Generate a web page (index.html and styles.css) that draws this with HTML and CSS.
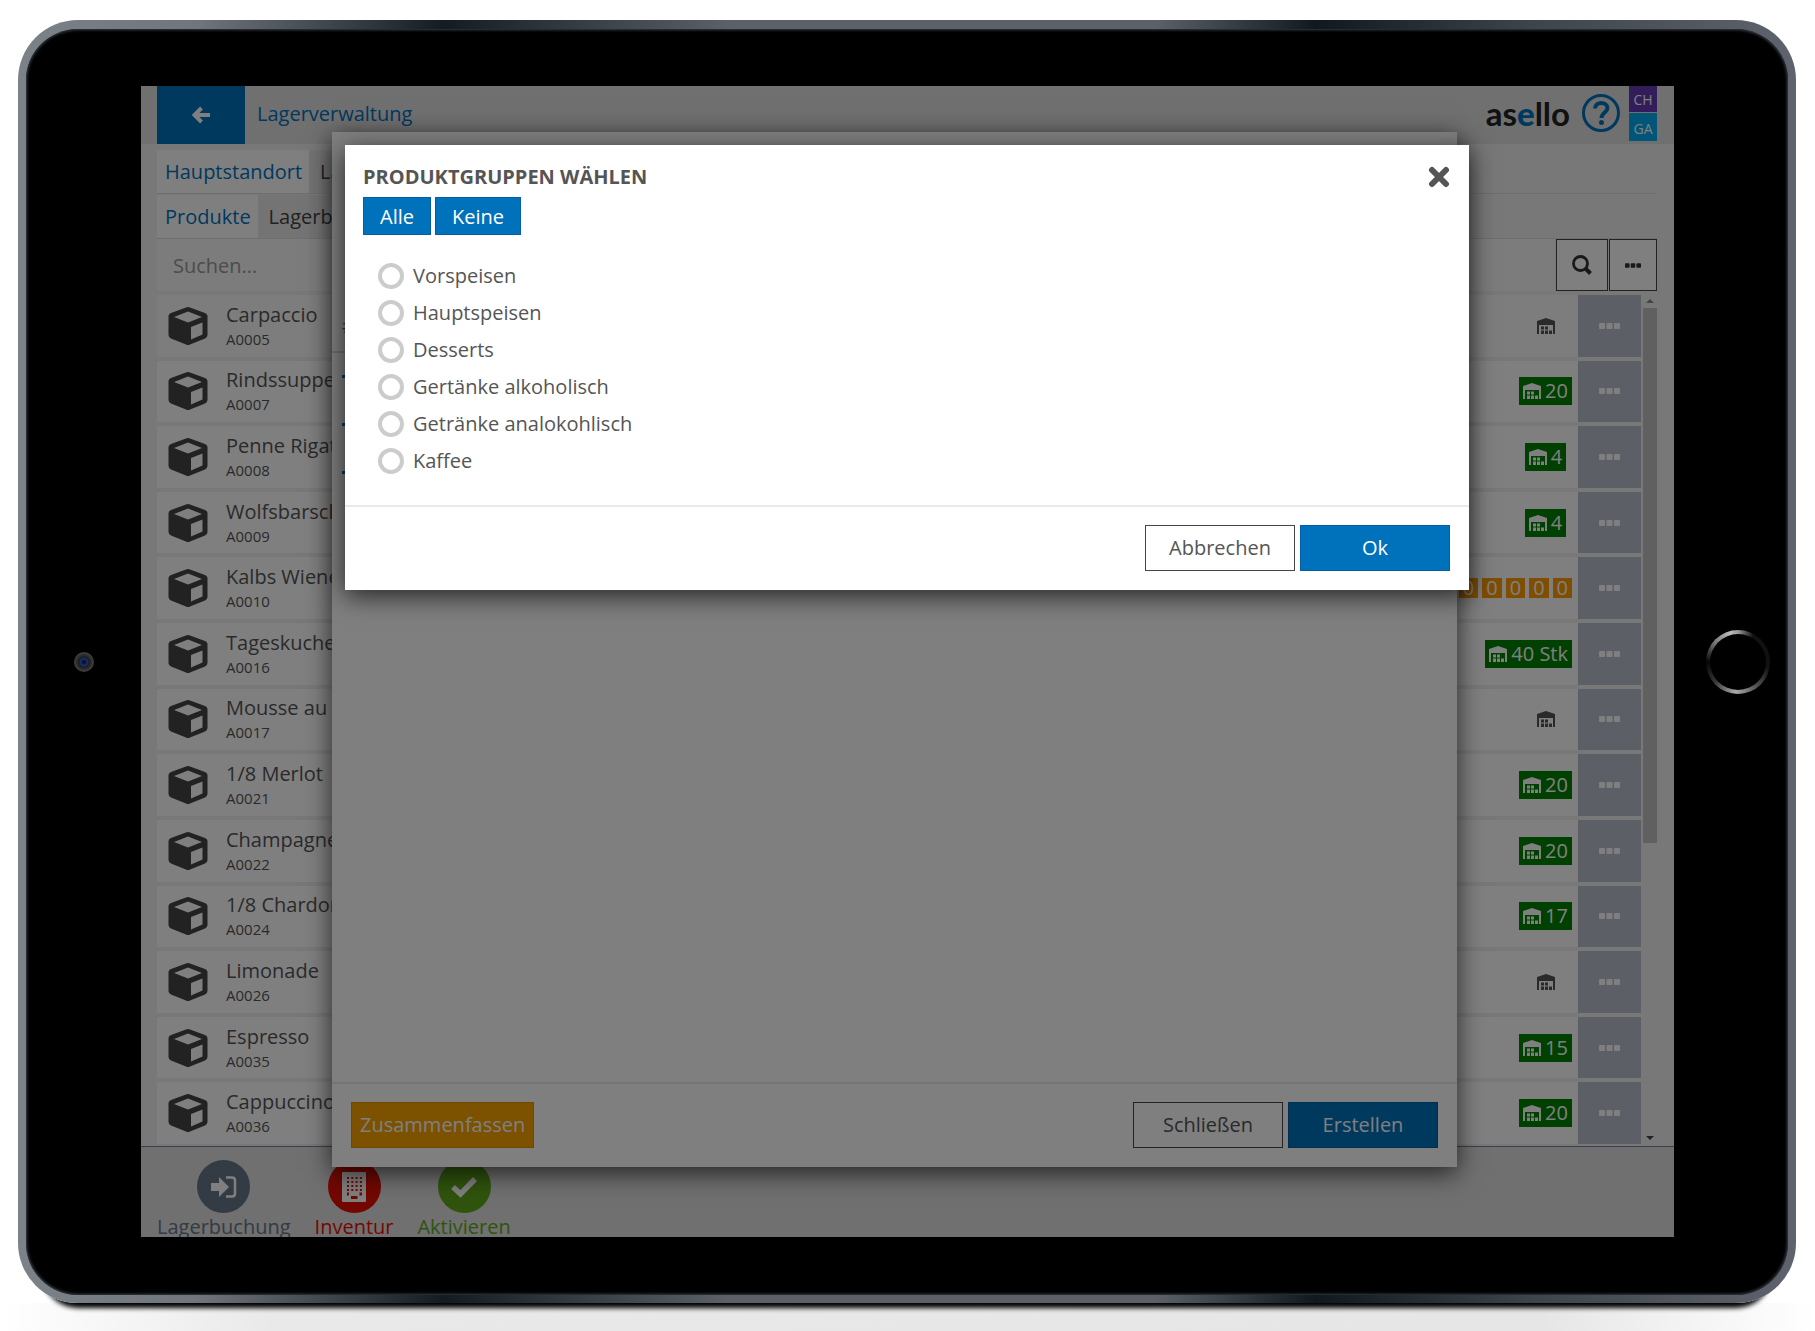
FILE: index.html
```
<!DOCTYPE html>
<html lang="de">
<head>
    <meta charset="UTF-8">
    <meta name="viewport" content="width=device-width, initial-scale=1.0">
    <title>Lagerverwaltung</title>
    <link rel="stylesheet" href="styles.css">
</head>
<body>
    <svg class="symbols" aria-hidden="true">
        <symbol id="cube" viewBox="0 0 40 40">
            <path fill="currentColor" fill-rule="evenodd" d="M18 1.500Q20 .5 22 1.500L37 7Q39.500 8 39.500 10V29Q39.500 31 37 32.500L22 38.500Q20 39.500 18 38.500L3 32.500Q.5 31 .5 29V10Q.5 8 3 7ZM20 5.500 6 11 20 16.500 34 11ZM23 21V33.500L34.500 28.500V16.500Z"/>
        </symbol>
        <symbol id="store" viewBox="0 0 18 16">
            <path fill="currentColor" fill-rule="evenodd" d="M0 16V3L9 0 18 3V16H16V7H2V16ZM4 8.500H7V11.500H4ZM8 8.500H11V11.500H8ZM4 12.500H7V16H4ZM8 12.500H11V16H8ZM12 12.500H15V16H12Z"/>
        </symbol>
        <symbol id="dots" viewBox="0 0 21 6">
            <g fill="currentColor"><rect width="6" height="6" rx="1"/><rect x="7.500" width="6" height="6" rx="1"/><rect x="15" width="6" height="6" rx="1"/></g>
        </symbol>
    </svg>

    <div class="device">
        <span class="camera"></span>
        <div class="screen">
            <header class="topbar">
                <button class="back" aria-label="Zurück">
                    <svg width="18" height="18" viewBox="0 0 18 18"><path d="M9.500 2 2.500 9 9.500 16M3 9H18" fill="none" stroke="currentColor" stroke-width="4"/></svg>
                </button>
                <h1>Lagerverwaltung</h1>
                <span class="logo">as<b>e</b>llo</span>
                <button class="help" aria-label="Hilfe">
                    <svg width="38" height="38" viewBox="0 0 38 38"><circle cx="19" cy="19" r="17.500" fill="none" stroke="currentColor" stroke-width="3"/><path d="M13 14.500C13 7 25.500 7.500 25.500 14 25.500 18.500 19.500 18.500 19.500 24" fill="none" stroke="currentColor" stroke-width="4"/><circle cx="19.500" cy="28.500" r="2.500" fill="currentColor"/></svg>
                </button>
                <div class="users"><span class="user">CH</span><span class="user user-ga">GA</span></div>
            </header>

            <main class="content">
                <nav class="tabs">
                    <a class="tab active" href="#">Hauptstandort</a>
                    <a class="tab" href="#">La</a>
                </nav>
                <nav class="tabs">
                    <a class="tab active" href="#">Produkte</a>
                    <a class="tab" href="#">Lagerb</a>
                </nav>
                <div class="search">
                    <input type="text" placeholder="Suchen..." aria-label="Suchen">
                    <button class="search-go" aria-label="Suche starten">
                        <svg width="20" height="20" viewBox="0 0 20 20"><circle cx="8.500" cy="8.500" r="7" fill="none" stroke="currentColor" stroke-width="2.800"/><path d="M13.500 13.500 18.500 18.500" stroke="currentColor" stroke-width="4" /></svg>
                    </button>
                    <button class="search-more" aria-label="Mehr"><svg width="16" height="5"><use href="#dots"/></svg></button>
                </div>
                <div class="list-wrap">
                    <ul class="list" id="list"></ul>
                    <div class="scrollbar">
                        <span class="arrow-up"></span>
                        <span class="thumb"></span>
                        <span class="arrow-down"></span>
                    </div>
                </div>
            </main>

            <footer class="actions">
                <button class="action">
                    <span class="circle"><svg width="26" height="22" viewBox="0 0 26 22"><path fill="currentColor" d="M0 7H8V1L18 11 8 21V15H0Z"/><path d="M15 1.500H21Q24 1.500 24 4.500V17.500Q24 20.500 21 20.500H15" fill="none" stroke="currentColor" stroke-width="2.500"/></svg></span>
                    Lagerbuchung
                </button>
                <button class="action red">
                    <span class="circle"><svg width="24" height="30" viewBox="0 0 24 30"><rect width="24" height="30" rx="1" fill="currentColor"/><path d="M5 6H20M5 10H20M5 14H20M5 18H20" stroke="#e51000" stroke-width="2" stroke-dasharray="2 2.300"/><path d="M5 22H7M17.500 22H20M9 25.500H15.500" stroke="#e51000" stroke-width="3"/></svg></span>
                    Inventur
                </button>
                <button class="action green">
                    <span class="circle"><svg width="26" height="22" viewBox="0 0 26 22"><path d="M2 11 9.500 18 24 3" fill="none" stroke="currentColor" stroke-width="5.500"/></svg></span>
                    Aktivieren
                </button>
            </footer>

            <section class="modal modal-back">
                <div class="modal-body">
                    <div class="column-head">#</div>
                    <span class="mark"></span>
                    <span class="mark"></span>
                    <span class="mark"></span>
                </div>
                <div class="modal-footer">
                    <button class="btn orange">Zusammenfassen</button>
                    <button class="btn wide">Schließen</button>
                    <button class="btn wide blue">Erstellen</button>
                </div>
            </section>

            <div class="overlay"></div>

            <section class="modal modal-front" role="dialog" aria-labelledby="dialog-title">
                <div class="modal-head">
                    <h2 id="dialog-title">Produktgruppen wählen</h2>
                    <button class="close" aria-label="Schließen">
                        <svg width="22" height="22" viewBox="0 0 22 22"><path d="M4 4 18 18M18 4 4 18" stroke="currentColor" stroke-width="6" stroke-linecap="round"/></svg>
                    </button>
                </div>
                <div class="quick">
                    <button class="btn small blue">Alle</button>
                    <button class="btn small blue">Keine</button>
                </div>
                <div class="options">
                    <label><input type="checkbox"> Vorspeisen</label>
                    <label><input type="checkbox"> Hauptspeisen</label>
                    <label><input type="checkbox"> Desserts</label>
                    <label><input type="checkbox"> Gertänke alkoholisch</label>
                    <label><input type="checkbox"> Getränke analokohlisch</label>
                    <label><input type="checkbox"> Kaffee</label>
                </div>
                <div class="modal-footer">
                    <button class="btn wide">Abbrechen</button>
                    <button class="btn wide blue">Ok</button>
                </div>
            </section>
        </div>
        <span class="home"></span>
    </div>

    <script src="list.js"></script>
</body>
</html>
```
FILE: styles.css
```
* {
    box-sizing: border-box;
}
body {
    margin: 0;
    min-height: 100vh;
    padding: 20px 19px 28px 18px;
    font-family: 'Open Sans', sans-serif;
    font-size: 20px;
    line-height: 28px;
    color: #555;
    background: linear-gradient(90deg, #fff, #e9e9e9 15%, #e6e6e6 85%, #fff) bottom / 100% 28px no-repeat #fff;
    display: flex;
}
button, input {
    font: inherit;
    color: inherit;
    border: 0;
    padding: 0;
    margin: 0;
    background: none;
}
button {
    cursor: pointer;
}
a {
    color: inherit;
    text-decoration: none;
}
h1, h2, ul {
    margin: 0;
    padding: 0;
    list-style: none;
}
svg {
    display: block;
    flex: none;
}
.symbols {
    position: absolute;
    width: 0;
    height: 0;
}

/* tablet */
.device {
    flex: 1;
    position: relative;
    display: flex;
    padding: 57px 114px 58px 115px;
    border: 8px solid transparent;
    border-top-width: 9px;
    border-radius: 60px;
    background: linear-gradient(#000, #000) padding-box, linear-gradient(90deg, #7b8288, #70767b 10%, #141c22 24%, #5b6167 40%, #5b6167 64%, #10191e 73%, #3d444b 85%, #5f636d) border-box;
    box-shadow: inset 0 0 3px 1px #3c424d, 0 29px 5px -24px #000;
}
.camera, .home {
    position: absolute;
    top: 50%;
    border-radius: 50%;
    transform: translateY(-50%);
}
.camera {
    left: 48px;
    width: 20px;
    height: 20px;
    background: radial-gradient(circle closest-side, #071030 10%, #16306e 35%, #1c1c20 50%, #3c3c3c 90%);
}
.home {
    right: 18px;
    width: 64px;
    height: 64px;
    background: radial-gradient(#000, #000) padding-box, conic-gradient(#999, #111 30deg, #111 100deg, #555 145deg, #aaa 185deg, #333 230deg, #050505 270deg, #777 310deg, #bbb 345deg, #999) border-box;
    border: 4px solid transparent;
}
.screen {
    flex: 1;
    min-width: 0;
    position: relative;
    display: flex;
    flex-direction: column;
    overflow: hidden;
    background: #f0f0f0;
}

/* top bar */
.topbar {
    display: flex;
    align-items: center;
    height: 58px;
    padding: 0 17px 0 16px;
    background: #e0e0e0;
}
.topbar h1 {
    flex: 1;
    padding: 0 0 2px 12px;
    font-size: 20px;
    font-weight: 400;
    color: #0072bc;
}
.back {
    width: 88px;
    height: 58px;
    display: flex;
    align-items: center;
    justify-content: center;
    color: #fff;
    background: #0072bc;
}
.logo {
    padding-bottom: 4px;
    font: 700 33px/40px Lato, sans-serif;
    color: #222;
}
.logo b, .help {
    color: #0072bc;
}
.help {
    margin: 0 9px 4px 12px;
}
.users {
    align-self: flex-start;
    display: flex;
    flex-direction: column;
    gap: 1px;
}
.user {
    width: 28px;
    height: 26px;
    font-size: 14px;
    line-height: 27px;
    text-align: center;
    color: #fff;
    background: #6439b3;
}
.user-ga {
    height: 28px;
    line-height: 31px;
    background: #00aaf0;
}

/* product list */
.content {
    flex: 1;
    min-height: 0;
    display: flex;
    flex-direction: column;
    padding: 6px 17px 2px 16px;
}
.tabs {
    display: flex;
    height: 44px;
    border-bottom: 1px solid #ddd;
}
.tabs + .tabs {
    height: 45px;
    padding-top: 1px;
}
.tab {
    height: 43px;
    padding: 0 7px 0 8px;
    line-height: 44px;
    color: #444;
    background: #e8e8e8;
}
.tab.active {
    color: #0072bc;
    background: #fff;
}
.tab + .tab {
    padding-left: 11px;
}
.search {
    display: flex;
    gap: 1px;
    height: 52px;
    margin-bottom: 4px;
}
.search input {
    flex: 1;
    padding: 2px 16px 0;
    background: #f8f8f8;
}
.search input::placeholder {
    color: #999;
}
.search button {
    display: flex;
    align-items: center;
    justify-content: center;
    border: 1px solid #444;
    background: #fff;
    color: #333;
}
.search .search-go {
    width: 52px;
}
.search .search-more {
    width: 48px;
}
.list-wrap {
    flex: 1;
    display: flex;
    gap: 1px;
    min-height: 0;
}
.list {
    flex: 1;
    display: grid;
    grid-auto-rows: 1fr;
    gap: 4px;
}
.item {
    display: flex;
    align-items: center;
    gap: 1px;
    background: #fff;
}
.item:first-child {
    background: #fbfbfb;
}
.item-icon {
    margin: 0 17px 0 11px;
    color: #444;
}
.item-text {
    flex: 1;
    padding-top: 2px;
    line-height: 24px;
}
.item-text small {
    display: block;
    font-size: 15px;
}
.stock {
    display: flex;
    justify-content: center;
    gap: 4px;
    min-width: 53px;
    margin-right: 5px;
}
.badge {
    display: flex;
    align-items: center;
    gap: 4px;
    height: 28px;
    padding: 0 4px;
    color: #fff;
    background: #008000;
}
.badge.empty {
    gap: 0;
    color: #555;
    background: none;
}
.badge.zero {
    height: 20px;
    background: #ff9c00;
}
.item-menu {
    align-self: stretch;
    width: 63px;
    display: flex;
    align-items: center;
    justify-content: center;
    color: #fff;
    background: #b8c0cc;
}
.scrollbar {
    width: 15px;
    display: flex;
    flex-direction: column;
    align-items: center;
}
.thumb {
    width: 14px;
    height: 63%;
    background: #c1c1c1;
}
.arrow-up, .arrow-down {
    border: 4px solid transparent;
}
.arrow-up {
    margin: 0 0 5px;
    border-bottom-color: #888;
}
.arrow-down {
    margin: auto 0 0;
    border-top-color: #444;
}

/* bottom bar */
.actions {
    display: flex;
    gap: 24px;
    height: 91px;
    padding: 13px 16px 0;
    border-top: 1px solid #70859e;
    background: #e0e0e0;
}
.action {
    display: flex;
    flex-direction: column;
    align-items: center;
    color: #667689;
}
.circle {
    width: 53px;
    height: 53px;
    flex: none;
    display: flex;
    align-items: center;
    justify-content: center;
    border-radius: 50%;
    color: #fff;
    background: #667689;
}
.action.red {
    color: #e51000;
}
.red .circle {
    background: #e51000;
}
.action.green {
    color: #5fa81a;
}
.green .circle {
    background: #5fa81a;
}

/* dialogs */
.overlay {
    position: absolute;
    inset: 0;
    background: rgba(0, 0, 0, 0.5);
}
.modal {
    position: absolute;
    display: flex;
    flex-direction: column;
    background: #fff;
    box-shadow: 0 6px 24px rgba(0, 0, 0, 0.7);
}
.modal-back {
    inset: 46px 217px 70px 191px;
}
.modal-front {
    top: 59px;
    left: 204px;
    right: 205px;
}
.modal-body {
    flex: 1;
    padding-top: 180px;
}
.column-head {
    height: 41px;
    padding-left: 10px;
    border-bottom: 2px solid #ddd;
}
.mark {
    display: block;
    width: 8px;
    height: 3px;
    margin: 22px 0 45px 10px;
    background: #0072bc;
}
.mark + .mark {
    margin-top: 0;
}
.modal-head {
    display: flex;
    justify-content: space-between;
    align-items: center;
    padding: 18px 19px 6px 18px;
}
.modal-head h2 {
    font-size: 20px;
    font-weight: 700;
    text-transform: uppercase;
}
.quick {
    display: flex;
    gap: 4px;
    padding-left: 18px;
}
.btn {
    height: 46px;
    padding: 0 8px;
    border: 1px solid #444;
    background: #fff;
}
.btn.wide {
    width: 150px;
}
.btn.small {
    height: 38px;
    padding: 1px 16px 0;
}
.btn.blue {
    color: #fff;
    background: #0072bc;
    border-color: #005fa8;
}
.btn.orange {
    margin-right: auto;
    color: #fff;
    background: #f8a200;
    border-color: #e09000;
}
.options {
    display: flex;
    flex-direction: column;
    padding: 22px 33px 26px;
}
.options label {
    display: flex;
    align-items: center;
    gap: 9px;
    height: 37px;
}
.options input {
    appearance: none;
    width: 26px;
    height: 26px;
    border: 4px solid #ccc;
    border-radius: 50%;
}
.options input:checked {
    background: #0072bc;
}
.modal-footer {
    display: flex;
    justify-content: flex-end;
    gap: 5px;
    padding: 18px 19px 19px;
    border-top: 2px solid #eaeaea;
}
```
FILE: list.js
```
const products = [
    ['Carpaccio', 'A0005', ''],
    ['Rindssuppe', 'A0007', '20'],
    ['Penne Rigate', 'A0008', '4'],
    ['Wolfsbarsch', 'A0009', '4'],
    ['Kalbs Wiener', 'A0010', null],
    ['Tageskuchen', 'A0016', '40 Stk'],
    ['Mousse au', 'A0017', ''],
    ['1/8 Merlot', 'A0021', '20'],
    ['Champagner', 'A0022', '20'],
    ['1/8 Chardonnay', 'A0024', '17'],
    ['Limonade', 'A0026', ''],
    ['Espresso', 'A0035', '15'],
    ['Cappuccino', 'A0036', '20']
];

function stock(amount) {
    // null = one counter per variant, all of them at zero
    if (amount === null) {
        return '<span class="badge zero">0</span>'.repeat(5);
    }
    const cls = amount === '' ? 'badge empty' : 'badge';
    return `<span class="${cls}"><svg width="18" height="16"><use href="#store"/></svg>${amount}</span>`;
}

document.getElementById('list').innerHTML = products.map(([name, number, amount]) => `
    <li class="item">
        <svg class="item-icon" width="40" height="40"><use href="#cube"/></svg>
        <div class="item-text">${name}<small>${number}</small></div>
        <div class="stock">${stock(amount)}</div>
        <button class="item-menu" aria-label="Mehr"><svg width="21" height="6"><use href="#dots"/></svg></button>
    </li>`).join('');
```
